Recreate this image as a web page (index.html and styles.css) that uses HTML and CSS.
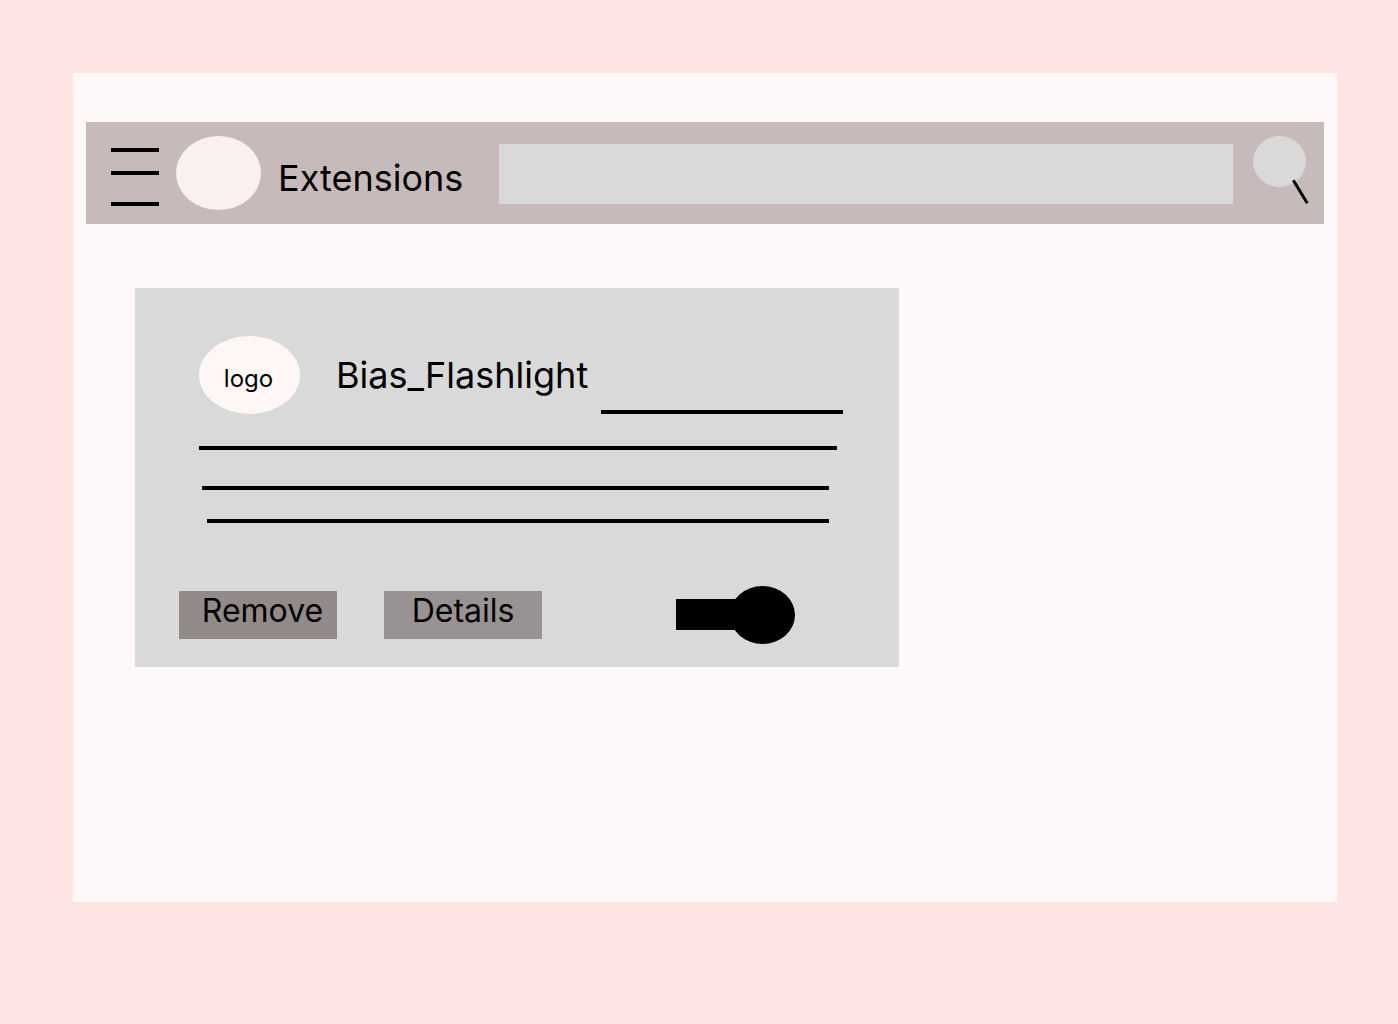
FILE: index.html
```html
<!DOCTYPE html>
<html lang="en">
<head>
  <meta charset="utf-8">
  <meta name="viewport" content="width=device-width, initial-scale=1">
  <title>Extensions</title>
  <link rel="stylesheet" href="styles.css">
</head>
<body>
  <div class="window">
    <header class="toolbar">
      <button class="menu" type="button" aria-label="Menu">
        <svg width="48" height="58" viewBox="0 0 48 58" aria-hidden="true">
          <path d="M0 2H48M0 25H48M0 56H48" stroke="#000" stroke-width="4"/>
        </svg>
      </button>
      <span class="brand"></span>
      <h1 class="title">Extensions</h1>
      <input class="search-field" type="search" aria-label="Search extensions">
      <button class="search-button" type="button" aria-label="Search">
        <svg width="56" height="69" viewBox="0 0 56 69" aria-hidden="true">
          <ellipse cx="26.5" cy="25.5" rx="26.5" ry="25.5" fill="#d9d9d9"/>
          <path d="M40.3 44.3L54.3 67.3" stroke="#000" stroke-width="3"/>
        </svg>
      </button>
    </header>
    <main class="content">
      <article class="card">
        <div class="card-head">
          <span class="logo">logo</span>
          <h2 class="title">Bias_Flashlight</h2>
          <span class="rule rule-short"></span>
        </div>
        <div class="description">
          <div class="rule"></div>
          <div class="rule rule-second"></div>
          <div class="rule rule-third"></div>
        </div>
        <div class="actions">
          <button class="action action-remove" type="button">Remove</button>
          <button class="action action-details" type="button">Details</button>
          <input class="toggle" type="checkbox" role="switch" aria-label="Enable Bias_Flashlight" checked>
        </div>
      </article>
    </main>
  </div>
</body>
</html>
```
FILE: styles.css
```css
* {
  box-sizing: border-box;
}

body {
  margin: 0;
  padding: 73px 61px 73px 73px;
  background: #fde5e4;
  color: #000;
  font-family: Inter, "Liberation Sans", sans-serif;
}

button {
  margin: 0;
  padding: 0;
  border: 0;
  background: none;
  color: inherit;
  font-family: inherit;
  cursor: pointer;
}

svg {
  display: block;
}

.window {
  padding: 49px 13px 235px;
  background: #fff8f8;
}

.toolbar {
  display: flex;
  align-items: flex-start;
  padding: 14px 15px 14px 25px;
  background: #c7baba;
}

.menu {
  margin: 12px 17px 0 0;
}

.brand {
  flex: none;
  width: 85px;
  height: 74px;
  border-radius: 50%;
  background: #f9f0ef;
}

.title {
  margin: 0;
  font-size: 36px;
  font-weight: 400;
  line-height: 44px;
}

.toolbar .title {
  margin: 20px 36px 0 17px;
}

.search-field {
  flex: 1;
  min-width: 0;
  height: 60px;
  margin: 8px 20px 0 0;
  padding: 0 16px;
  border: 0;
  border-radius: 0;
  appearance: none;
  background: #d9d9d9;
  font: inherit;
  font-size: 24px;
}

.content {
  padding: 64px 49px 0;
}

.card {
  max-width: 764px;
  padding: 48px 56px 23px 44px;
  background: #d9d9d9;
}

.card-head {
  display: flex;
  align-items: center;
  padding-left: 20px;
}

.logo {
  display: flex;
  align-items: center;
  justify-content: center;
  width: 101px;
  height: 78px;
  margin-right: 36px;
  padding: 8px 2px 0 0;
  border-radius: 50%;
  background: #fff7f5;
  font-size: 24px;
  line-height: 30px;
}

.rule {
  height: 4px;
  background: #000;
}

.rule-short {
  align-self: flex-end;
  width: 242px;
  margin-left: auto;
}

.description {
  padding: 32px 6px 0 20px;
}

.rule-second {
  margin: 36px 8px 0 3px;
}

.rule-third {
  margin: 29px 8px 0;
}

.actions {
  display: flex;
  align-items: center;
  padding: 63px 48px 0 0;
}

.action {
  width: 158px;
  height: 48px;
  margin-right: 47px;
  padding-bottom: 8px;
  font-size: 32px;
  line-height: 40px;
}

.action-remove {
  padding-left: 9px;
  background: #928989;
}

.action-details {
  background: #989392;
}

.toggle {
  display: flex;
  align-items: center;
  justify-content: flex-end;
  width: 119px;
  height: 58px;
  margin: 0 0 0 auto;
  appearance: none;
  background: linear-gradient(#000, #000) left 13px / 64px 31px no-repeat;
  cursor: pointer;
}

.toggle::before {
  content: "";
  width: 65px;
  height: 58px;
  border-radius: 50%;
  background: #000;
}
```
